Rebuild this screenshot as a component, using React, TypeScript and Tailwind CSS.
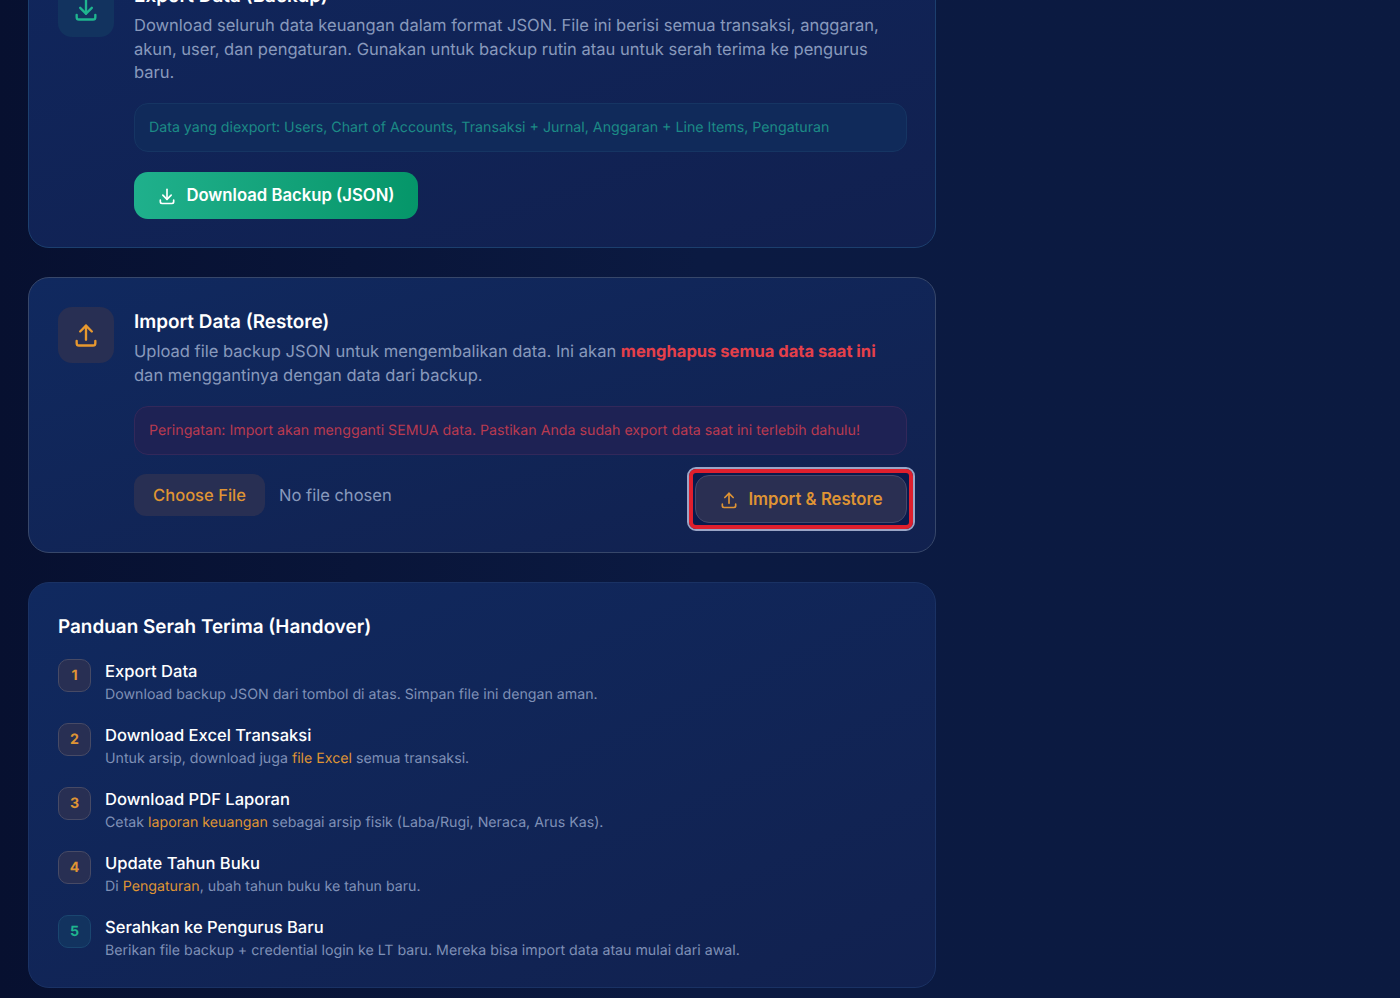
function DownIcon({ className }: { className: string }) {
  return (
    <svg className={className} viewBox="0 0 24 24" fill="none" stroke="currentColor" strokeWidth="2" strokeLinecap="round" strokeLinejoin="round">
      <path d="M4 17v2a2 2 0 0 0 2 2h12a2 2 0 0 0 2 -2v-2" />
      <path d="M7 11l5 5l5 -5" />
      <path d="M12 4l0 12" />
    </svg>
  );
}
function UpIcon({ className }: { className: string }) {
  return (
    <svg className={className} viewBox="0 0 24 24" fill="none" stroke="currentColor" strokeWidth="2" strokeLinecap="round" strokeLinejoin="round">
      <path d="M4 17v2a2 2 0 0 0 2 2h12a2 2 0 0 0 2 -2v-2" />
      <path d="M7 9l5 -5l5 5" />
      <path d="M12 4l0 12" />
    </svg>
  );
}

const Hi = ({ children }: { children: React.ReactNode }) => <span className="text-[#df9434]">{children}</span>;

const steps: { n: number; title: string; desc: React.ReactNode; green?: boolean }[] = [
  { n: 1, title: "Export Data", desc: "Download backup JSON dari tombol di atas. Simpan file ini dengan aman." },
  { n: 2, title: "Download Excel Transaksi", desc: <>Untuk arsip, download juga <Hi>file Excel</Hi> semua transaksi.</> },
  { n: 3, title: "Download PDF Laporan", desc: <>Cetak <Hi>laporan keuangan</Hi> sebagai arsip fisik (Laba/Rugi, Neraca, Arus Kas).</> },
  { n: 4, title: "Update Tahun Buku", desc: <>Di <Hi>Pengaturan</Hi>, ubah tahun buku ke tahun baru.</> },
  { n: 5, title: "Serahkan ke Pengurus Baru", desc: "Berikan file backup + credential login ke LT baru. Mereka bisa import data atau mulai dari awal.", green: true },
];

export default function App() {
  return (
    <div className="h-[998px] overflow-hidden bg-gradient-to-r from-[#071030] via-[#0b1a42] to-[#0b1a40] font-['Inter',sans-serif] pl-[28px] [text-rendering:geometricPrecision] antialiased">
      <div className="w-[908px] -mt-[49px] flex flex-col gap-[29px]">
        <section className="h-[297px] rounded-[21px] border border-[#1c3f6e] bg-gradient-to-br from-[#10265c] to-[#11204f] p-[29px] flex gap-[20px]">
          <div className="w-[56px] h-[56px] shrink-0 rounded-[14px] bg-[#12335f] text-[#1fb58f] flex items-center justify-center">
            <DownIcon className="w-[28px] h-[28px]" />
          </div>
          <div className="flex-1 min-w-0">
            <h2 className="pt-[1px] text-[18.9px] leading-[28px] font-semibold text-white">Export Data (Backup)</h2>
            <p className="mt-[4px] text-[16.55px] leading-[23.5px] text-[#8899bc]">
              Download seluruh data keuangan dalam format JSON. File ini berisi semua transaksi, anggaran, akun, user, dan pengaturan. Gunakan untuk backup rutin atau untuk serah terima ke pengurus baru.
            </p>
            <div className="mt-[18px] w-[773px] h-[49px] rounded-[14px] border border-[#163563] bg-[#102a5a] px-[14px] pt-[1px] flex items-center text-[14.2px] text-[#1c8a86]">
              Data yang diexport: Users, Chart of Accounts, Transaksi + Jurnal, Anggaran + Line Items, Pengaturan
            </div>
            <button className="mt-[20px] h-[47px] w-[284px] pt-[1px] rounded-[14px] bg-gradient-to-r from-[#1fb08c] to-[#059669] text-white font-semibold text-[16.7px] flex items-center justify-center gap-[9px]">
              <DownIcon className="w-[20px] h-[20px]" />
              Download Backup (JSON)
            </button>
          </div>
        </section>

        <section className="h-[276px] rounded-[21px] border border-[#37476a] bg-gradient-to-br from-[#10295f] to-[#11214f] p-[29px] flex gap-[20px]">
          <div className="w-[56px] h-[56px] shrink-0 rounded-[14px] bg-[#282f53] text-[#e8992f] flex items-center justify-center">
            <UpIcon className="w-[28px] h-[28px]" />
          </div>
          <div className="flex-1 min-w-0">
            <h2 className="pt-[1px] text-[18.9px] leading-[28px] font-semibold text-white">Import Data (Restore)</h2>
            <p className="mt-[4px] text-[16.55px] leading-[23.5px] text-[#8899bc]">
              Upload file backup JSON untuk mengembalikan data. Ini akan <strong className="font-bold text-[#e5404a]">menghapus semua data saat ini</strong> dan menggantinya dengan data dari backup.
            </p>
            <div className="mt-[19px] w-[773px] h-[49px] rounded-[14px] border border-[#33285a] bg-[#1e2254] px-[14px] flex items-center text-[14.2px] text-[#b93a50]">
              Peringatan: Import akan mengganti SEMUA data. Pastikan Anda sudah export data saat ini terlebih dahulu!
            </div>
            <div className="mt-[19px] flex justify-between items-start">
              <div className="flex items-center gap-[14px]">
                <span className="h-[42px] w-[131px] rounded-[12px] bg-[#282f53] text-[#df9434] text-[16.55px] font-medium flex items-center justify-center">Choose File</span>
                <span className="text-[16.55px] text-[#8899bc]">No file chosen</span>
              </div>
              <div className="relative mt-[1px] mr-[-1px]">
                <div className="absolute -inset-[8px] rounded-[9px] border-[2px] border-[#9aa5c6]">
                  <div className="w-full h-full rounded-[7px] border-[4px] border-[#df1f2d] bg-[#0a1a4c]" />
                </div>
                <button className="relative h-[48px] w-[212px] pt-[1px] rounded-[14px] border border-[#44496b] bg-[#2a2f52] text-[#df9434] font-semibold text-[16.7px] flex items-center justify-center gap-[9px]">
                  <UpIcon className="w-[20px] h-[20px]" />
                  Import &amp; Restore
                </button>
              </div>
            </div>
          </div>
        </section>

        <section className="h-[406px] rounded-[21px] border border-[#1a3264] bg-gradient-to-br from-[#10295f] to-[#11214f] p-[29px]">
          <h2 className="pt-[1px] text-[18.9px] leading-[28px] font-semibold text-white">Panduan Serah Terima (Handover)</h2>
          <div className="mt-[18px] flex flex-col gap-[16px]">
            {steps.map((s) => (
              <div key={s.n} className="flex gap-[14px] h-[48px]">
                <div className={`w-[33px] h-[33px] shrink-0 rounded-[10px] border flex items-center justify-center text-[14.2px] font-bold ${s.green ? "border-[#1a4670] bg-[#12335f] text-[#1fb58f]" : "border-[#474a65] bg-[#282f53] text-[#df9434]"}`}>{s.n}</div>
                <div>
                  <div className="text-[16.55px] leading-[24px] font-medium text-white">{s.title}</div>
                  <div className="mt-[1px] text-[14.2px] leading-[22px] text-[#7f90b6]">{s.desc}</div>
                </div>
              </div>
            ))}
          </div>
        </section>
      </div>
    </div>
  );
}
